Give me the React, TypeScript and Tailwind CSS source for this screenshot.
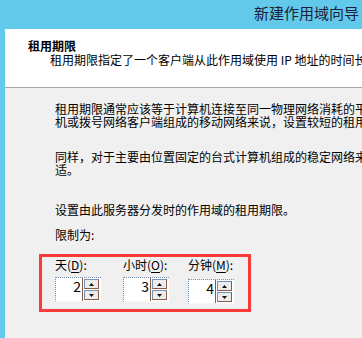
const cjk = { fontFamily: '"Noto Sans CJK SC", "Noto Sans", sans-serif' };

function Spin({ value, lower }: { value: string; lower?: boolean }) {
  return (
    <div
      className={`flex h-[25px] w-[46px] border-t border-l border-[#7592b4] border-b border-b-white border-dotted bg-white bg-clip-padding ${
        lower ? "mt-[8px]" : "mt-[6px]"
      }`}
    >
      <div className="w-[26px] pt-[1px] pr-[1px] text-right text-[14px] leading-none text-black">
        {value}
      </div>
      <div className="flex flex-col gap-[1px] border-l border-[#8b5a45] pt-[1px] pl-[1px]">
        <div className="flex h-[10px] w-[15px] items-center justify-center border-t border-l border-[#7592b4] border-r border-b border-r-[#8b5a45] border-b-[#8b5a45] bg-[#ececec]">
          <svg width="5" height="3" viewBox="0 0 5 3">
            <path d="M2.5 0 L5 3 L0 3 Z" fill="#111" />
          </svg>
        </div>
        <div className="flex h-[10px] w-[15px] items-center justify-center border-t border-l border-[#7592b4] border-r border-b border-r-[#8b5a45] border-b-[#8b5a45] bg-[#ececec]">
          <svg width="5" height="3" viewBox="0 0 5 3">
            <path d="M0 0 L5 0 L2.5 3 Z" fill="#111" />
          </svg>
        </div>
      </div>
    </div>
  );
}

export default function App() {
  return (
    <div
      className="flex h-[338px] w-[362px] flex-col overflow-hidden bg-[#63c9eb] whitespace-nowrap"
      style={cjk}
    >
      <div className="h-[29px] shrink-0 pt-[5px] pl-[254px] text-[15px] leading-none text-[#1c2038]">
        新建作用域向导
      </div>

      <div className="ml-[5px] flex flex-1 flex-col">
        <div className="h-[59px] shrink-0 border-b border-[#a3a8ad] bg-white pt-[11px] pl-[23px] text-black">
          <div className="text-[12px] leading-none font-bold">租用期限</div>
          <div className="mt-[2px] pl-[22px] text-[12px] leading-none">
            租用期限指定了一个客户端从此作用域使用 IP 地址的时间长短。
          </div>
        </div>

        <div className="flex flex-1 flex-col bg-[#f0f0f0] pt-[14px] pl-[34px] text-[12px] leading-[13px] text-black">
          <div className="pl-[16px]">
            <p>租用期限通常应该等于计算机连接至同一物理网络消耗的平均时间。对于主要由便携式计算</p>
            <p>机或拨号网络客户端组成的移动网络来说，设置较短的租用期限十分有用。</p>
          </div>
          <div className="mt-[22px] pl-[16px]">
            <p>同样，对于主要由位置固定的台式计算机组成的稳定网络来说，设置较长的租用期限更合</p>
            <p>适。</p>
          </div>
          <p className="mt-[27px] pl-[16px]">设置由此服务器分发时的作用域的租用期限。</p>
          <p className="mt-[12px] pl-[16px]">限制为:</p>

          <div className="mt-[13px] flex h-[58px] w-[212px] border-[3px] border-[#fd3a3a] pt-[1px] pl-[13px]">
            <div className="w-[68px]">
              <div>
                天(<u className="underline-offset-2">D</u>):
              </div>
              <Spin value="2" />
            </div>
            <div className="w-[65px]">
              <div>
                小时(<u className="underline-offset-2">O</u>):
              </div>
              <Spin value="3" />
            </div>
            <div>
              <div>
                分钟(<u className="underline-offset-2">M</u>):
              </div>
              <Spin value="4" lower />
            </div>
          </div>
        </div>
      </div>
    </div>
  );
}
